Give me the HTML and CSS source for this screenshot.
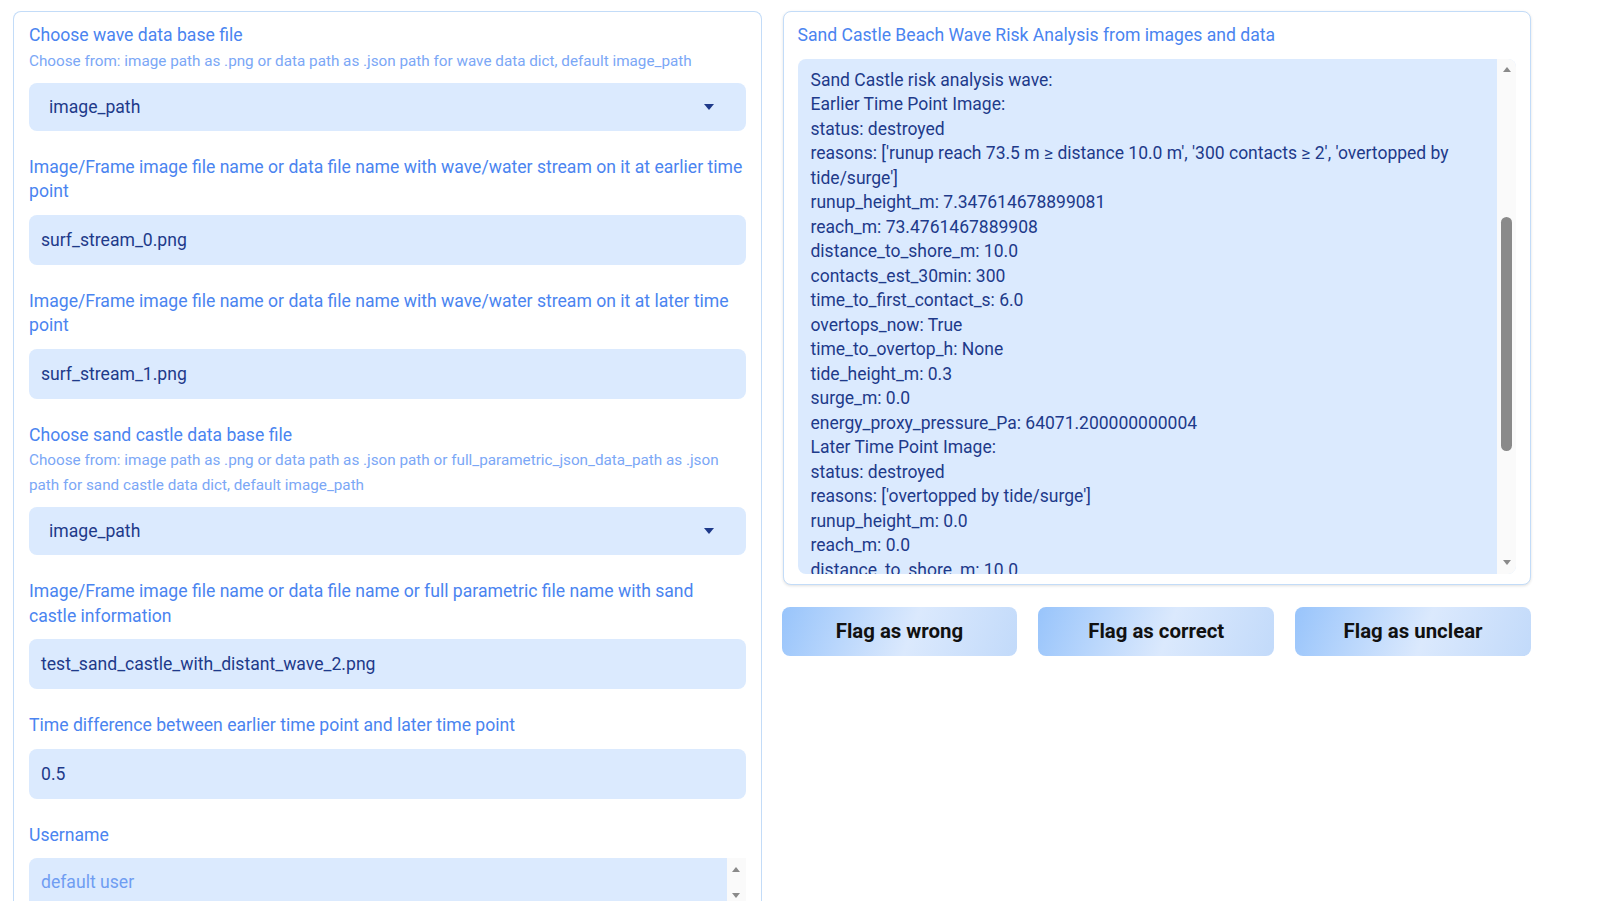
FILE: index.html
```html
<!DOCTYPE html>
<html>
<head>
<meta charset="utf-8">
<meta name="viewport" content="width=device-width, initial-scale=1">
<link rel="stylesheet" href="styles.css">
</head>
<body>
  <div class="app">

    <div class="col">
      <div class="panel panel-form">

        <div class="field">
          <div class="label">Choose wave data base file</div>
          <div class="info">Choose from: image path as .png or data path as .json path for wave data dict, default image_path</div>
          <div class="dropdown"><span>image_path</span><span class="caret"></span></div>
        </div>

        <div class="field">
          <div class="label">Image/Frame image file name or data file name with wave/water stream on it at earlier time point</div>
          <div class="textbox">surf_stream_0.png</div>
        </div>

        <div class="field">
          <div class="label">Image/Frame image file name or data file name with wave/water stream on it at later time point</div>
          <div class="textbox">surf_stream_1.png</div>
        </div>

        <div class="field">
          <div class="label">Choose sand castle data base file</div>
          <div class="info">Choose from: image path as .png or data path as .json path or full_parametric_json_data_path as .json path for sand castle data dict, default image_path</div>
          <div class="dropdown"><span>image_path</span><span class="caret"></span></div>
        </div>

        <div class="field">
          <div class="label">Image/Frame image file name or data file name or full parametric file name with sand castle information</div>
          <div class="textbox">test_sand_castle_with_distant_wave_2.png</div>
        </div>

        <div class="field">
          <div class="label">Time difference between earlier time point and later time point</div>
          <div class="textbox">0.5</div>
        </div>

        <div class="field">
          <div class="label">Username</div>
          <div class="textarea-small">
            <div class="placeholder">default user</div>
            <div class="scrollbar scrollbar-small">
              <span class="arrow-up"></span>
              <span class="arrow-down"></span>
            </div>
          </div>
        </div>

      </div>
    </div>

    <div class="col">
      <div class="panel panel-output">
        <div class="label">Sand Castle Beach Wave Risk Analysis from images and data</div>
        <div class="output">
          <div class="output-text">Sand Castle risk analysis wave:
Earlier Time Point Image:
status: destroyed
reasons: ['runup reach 73.5 m ≥ distance 10.0 m', '300 contacts ≥ 2', 'overtopped by tide/surge']
runup_height_m: 7.347614678899081
reach_m: 73.4761467889908
distance_to_shore_m: 10.0
contacts_est_30min: 300
time_to_first_contact_s: 6.0
overtops_now: True
time_to_overtop_h: None
tide_height_m: 0.3
surge_m: 0.0
energy_proxy_pressure_Pa: 64071.200000000004
Later Time Point Image:
status: destroyed
reasons: ['overtopped by tide/surge']
runup_height_m: 0.0
reach_m: 0.0
distance_to_shore_m: 10.0</div>
          <div class="scrollbar">
            <span class="arrow-up"></span>
            <span class="thumb"></span>
            <span class="arrow-down"></span>
          </div>
        </div>
      </div>

      <div class="actions">
        <button class="btn">Flag as wrong</button>
        <button class="btn">Flag as correct</button>
        <button class="btn">Flag as unclear</button>
      </div>
    </div>

  </div>
</body>
</html>
```
FILE: styles.css
```css
html, body {
  margin: 0;
  height: 100%;
  overflow: hidden;
  background: #fff;
  font-family: Roboto, "Liberation Sans", sans-serif;
}

.app {
  display: flex;
  gap: 21px;
  padding: 11px 71px 0 13px;
}

.col {
  flex: 1;
  min-width: 0;
}

.panel {
  border: 1px solid #c3dcf8;
  border-radius: 8px;
  background: #fff;
  padding: 11px 15px;
}

.panel-form {
  border-bottom: none;
  border-radius: 8px 8px 0 0;
  padding-bottom: 40px;
}

.panel-output {
  padding: 11px 14px 10px 14px;
  box-shadow: 0 1px 3px rgba(0, 0, 0, 0.12);
}

.field {
  margin-bottom: 24px;
}

.label {
  font-size: 17.6px;
  line-height: 24.5px;
  color: #4a84f0;
  margin-bottom: 11px;
  padding-right: 2px;
}

.info {
  font-size: 15.25px;
  line-height: 25px;
  color: #7ba7f6;
  margin-top: -10px;
  margin-bottom: 9px;
}

.textbox,
.dropdown {
  display: flex;
  align-items: center;
  background: #dbeafe;
  border-radius: 8px;
  font-size: 17.6px;
  color: #1e3a8a;
}

.textbox {
  height: 50px;
  padding: 0 12px;
}

.dropdown {
  height: 48px;
  padding: 0 32px 0 20px;
  justify-content: space-between;
}

.caret {
  width: 0;
  height: 0;
  border-left: 5px solid transparent;
  border-right: 5px solid transparent;
  border-top: 6px solid #1e3a8a;
}

/* textarea look-alikes with a drawn scrollbar */
.textarea-small {
  display: flex;
  height: 60px;
  background: #dbeafe;
  border-radius: 8px 0 0 0;
  overflow: hidden;
}

.placeholder {
  flex: 1;
  padding: 12px 12px 0 12px;
  font-size: 17.6px;
  line-height: 24.5px;
  color: #6f9df2;
}

.output {
  display: flex;
  height: 515px;
  margin-top: 10px;
  background: #dbeafe;
  border-radius: 8px;
  overflow: hidden;
}

.output-text {
  flex: 1;
  padding: 9px 12px 0 13px;
  white-space: pre-wrap;
  font-size: 17.5px;
  line-height: 24.5px;
  color: #1e3a8a;
  overflow: hidden;
}

.scrollbar {
  width: 19px;
  background: #fafafa;
  display: flex;
  flex-direction: column;
  align-items: center;
  padding: 8px 0 9px;
}

.scrollbar-small {
  padding-top: 9px;
}

.arrow-up,
.arrow-down {
  width: 0;
  height: 0;
  border-left: 4.5px solid transparent;
  border-right: 4.5px solid transparent;
}

.arrow-up {
  border-bottom: 5px solid #8a8a8a;
}

.arrow-down {
  border-top: 5px solid #8a8a8a;
  margin-top: auto;
}

.scrollbar-small .arrow-down {
  margin-top: 21px;
}

.thumb {
  width: 11px;
  height: 234px;
  margin-top: 145px;
  border-radius: 6px;
  background: #8a8a8a;
}

.actions {
  display: flex;
  gap: 21px;
  margin-top: 22px;
  margin-left: -1px;
}

.btn {
  flex: 1;
  height: 49px;
  border: none;
  border-radius: 8px;
  background: linear-gradient(110deg, #98c4fb 0%, #dbe9fd 55%, #c2dafa 100%);
  font-family: Roboto, "Liberation Sans", sans-serif;
  font-size: 20.4px;
  font-weight: 700;
  color: #111;
  cursor: pointer;
}
```
